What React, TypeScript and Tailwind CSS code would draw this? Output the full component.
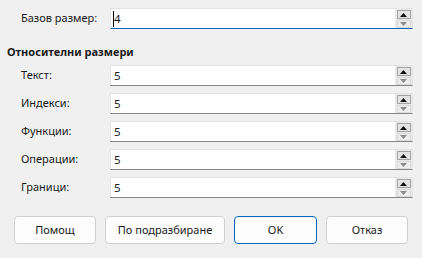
import React from 'react'

const FONT = { fontFamily: '"Noto Sans", "Open Sans", sans-serif' }

function Spin({ value, focused, caret }: { value: string; focused?: boolean; caret?: boolean }) {
  return (
    <div
      className={
        'flex-1 flex h-[21px] border border-[#e4e4e4] ' +
        (focused ? 'border-b-[#0067c0]' : 'border-b-[#868686]')
      }
    >
      <div className="relative flex-1 bg-white flex items-center pl-[3px] text-[11.5px] text-[#1a1a1a]">
        {caret && <span className="absolute left-[2px] top-[2px] w-[1px] h-[16px] bg-black" />}
        {value}
      </div>
      <div className="w-[17px] bg-[#e9e9e9] flex flex-col items-center pt-[1px] gap-[1px]">
        <div className="w-[14px] h-[9px] border border-[#a3a3a3] bg-[#e4e4e4] flex items-center justify-center">
          <svg width="7" height="4" viewBox="0 0 7 4">
            <path d="M3.5 0L7 4H0z" fill="#111" />
          </svg>
        </div>
        <div className="w-[14px] h-[8px] border border-[#dadada] bg-[#ececec] flex items-center justify-center">
          <svg width="7" height="4" viewBox="0 0 7 4">
            <path d="M0 0H7L3.5 4z" fill="#8a8a8a" />
          </svg>
        </div>
      </div>
    </div>
  )
}

const ROWS = ['Текст:', 'Индекси:', 'Функции:', 'Операции:', 'Граници:']
const BUTTONS = [
  { label: 'Помощ', w: 'w-[82px]' },
  { label: 'По подразбиране', w: 'w-[120px]' },
  { label: 'OK', w: 'w-[83px]', primary: true },
  { label: 'Отказ', w: 'w-[82px]' },
]

export default function App() {
  return (
    <div className="w-[422px] h-[258px] bg-[#f0f0f0] text-[#1a1a1a] overflow-hidden pt-[8px] pr-[9px]" style={FONT}>
      <div className="flex items-center">
        <label className="w-[110px] pl-[21px] text-[11px]">Базов размер:</label>
        <Spin value="4" focused caret />
      </div>

      <div className="mt-[15px] pl-[7px] h-[16px] leading-[16px] text-[11px] font-bold">Относителни размери</div>

      <div className="mt-[5px] flex flex-col gap-[7px]">
        {ROWS.map((r) => (
          <div key={r} className="flex items-center">
            <label className="w-[110px] pl-[21px] text-[11px]">{r}</label>
            <Spin value="5" />
          </div>
        ))}
      </div>

      <div className="mt-[18px] pl-[14px] flex gap-[9px]">
        {BUTTONS.map((b) => (
          <button
            key={b.label}
            className={
              b.w +
              ' h-[28px] rounded-[4px] bg-[#fdfdfd] text-[11px] text-[#1a1a1a] ' +
              (b.primary ? 'border border-[#0067c0]' : 'border border-[#d0d0d0]')
            }
          >
            {b.label}
          </button>
        ))}
      </div>
    </div>
  )
}
